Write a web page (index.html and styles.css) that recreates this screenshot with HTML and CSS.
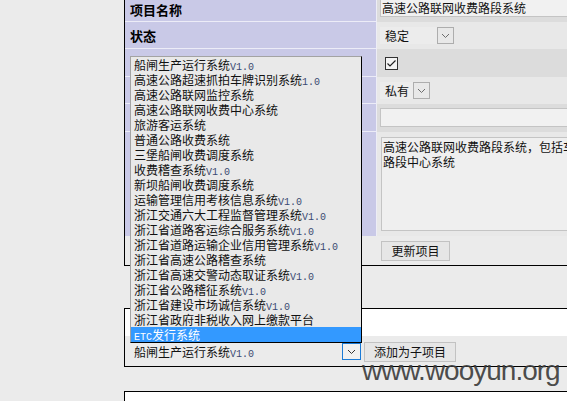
FILE: index.html
```html
<!DOCTYPE html>
<html>
<head>
<meta charset="utf-8">
<link rel="stylesheet" href="styles.css">
</head>
<body>
<div class="form-box">
  <div class="row r1">
    <div class="label">项目名称</div>
    <div class="value v-dark top"><input class="text-input" type="text" value="高速公路联网收费路段系统"></div>
  </div>
  <div class="row r2">
    <div class="label">状态</div>
    <div class="value v-light">
      <span class="sel sel-wide"><span class="sel-text">稳定</span><span class="arrow"><svg width="9" height="6" viewBox="0 0 9 6"><path d="M1 1 L4.5 4.5 L8 1" fill="none" stroke="#6d6d6d" stroke-width="1"/></svg></span></span>
    </div>
  </div>
  <div class="row r3">
    <div class="label"></div>
    <div class="value v-dark">
      <span class="checkbox"><svg width="11" height="11" viewBox="0 0 11 11"><path d="M1.5 5.5 L4 8 L9.5 2.5" fill="none" stroke="#222" stroke-width="1.2"/></svg></span>
    </div>
  </div>
  <div class="row r4">
    <div class="label"></div>
    <div class="value v-light">
      <span class="sel sel-narrow"><span class="sel-text">私有</span><span class="arrow"><svg width="9" height="6" viewBox="0 0 9 6"><path d="M1 1 L4.5 4.5 L8 1" fill="none" stroke="#6d6d6d" stroke-width="1"/></svg></span></span>
    </div>
  </div>
  <div class="row r5">
    <div class="label"></div>
    <div class="value v-dark top"><input class="text-input" type="text" value=""></div>
  </div>
  <div class="row r6">
    <div class="label last"></div>
    <div class="value v-light top"><textarea class="desc" wrap="off">高速公路联网收费路段系统，包括车道系统、收费站系统、
路段中心系统</textarea></div>
  </div>
  <div class="btn-row">
    <button class="btn btn-update">更新项目</button>
  </div>
</div>

<div class="sub-box">
  <div class="sub-white"></div>
  <div class="sub-row">
    <span class="sel sel-parent"><span class="sel-text">船闸生产运行系统<span class="ver">V1.0</span></span><span class="arrow arrow-focus"><svg width="9" height="6" viewBox="0 0 9 6"><path d="M1 1 L4.5 4.5 L8 1" fill="none" stroke="#333" stroke-width="1"/></svg></span></span>
    <button class="btn btn-add">添加为子项目</button>
  </div>
</div>

<div class="third-box"></div>

<ul class="listbox">
  <li class="opt">船闸生产运行系统<span class="ver">V1.0</span></li>
  <li class="opt">高速公路超速抓拍车牌识别系统<span class="ver">1.0</span></li>
  <li class="opt">高速公路联网监控系统</li>
  <li class="opt">高速公路联网收费中心系统</li>
  <li class="opt">旅游客运系统</li>
  <li class="opt">普通公路收费系统</li>
  <li class="opt">三堡船闸收费调度系统</li>
  <li class="opt">收费稽查系统<span class="ver">V1.0</span></li>
  <li class="opt">新坝船闸收费调度系统</li>
  <li class="opt">运输管理信用考核信息系统<span class="ver">V1.0</span></li>
  <li class="opt">浙江交通六大工程监督管理系统<span class="ver">V1.0</span></li>
  <li class="opt">浙江省道路客运综合服务系统<span class="ver">V1.0</span></li>
  <li class="opt">浙江省道路运输企业信用管理系统<span class="ver">V1.0</span></li>
  <li class="opt">浙江省高速公路稽查系统</li>
  <li class="opt">浙江省高速交警动态取证系统<span class="ver">V1.0</span></li>
  <li class="opt">浙江省公路稽征系统<span class="ver">V1.0</span></li>
  <li class="opt">浙江省建设市场诚信系统<span class="ver">V1.0</span></li>
  <li class="opt">浙江省政府非税收入网上缴款平台</li>
  <li class="opt selected"><span class="ver">ETC</span>发行系统</li>
</ul>

<div class="watermark">www.wooyun.org</div>
</body>
</html>
```

FILE: styles.css
```css
html, body {
  margin: 0;
  padding: 0;
}

body {
  background: #ebebeb;
  font-family: "Noto Sans CJK SC", "Liberation Sans", sans-serif;
  font-size: 12px;
  color: #111;
  width: 567px;
  height: 401px;
  overflow: hidden;
  position: relative;
}

.form-box {
  margin-left: 124px;
  margin-top: -2px;
  border-left: 1px solid #000;
  border-bottom: 1px solid #000;
}

.row {
  display: flex;
  background: #ededf6;
}

.label {
  flex: none;
  width: 251px;
  box-sizing: border-box;
  padding-left: 5px;
  background: #c9c9e7;
  border-bottom: 1px solid #ececf7;
  font-weight: bold;
  font-size: 13px;
  display: flex;
  align-items: center;
  color: #000;
}

.label.last {
  border-bottom: none;
}

.value {
  flex: 1;
  min-width: 0;
  overflow: hidden;
  margin-left: 1px;
  padding-left: 3px;
  display: flex;
  align-items: center;
}

.value.top {
  align-items: flex-start;
}

.v-dark { background: #dcdcdc; }
.v-light { background: #e8e8e8; }

.r1 { height: 24px; }
.r2 { height: 27px; }
.r3 { height: 28px; }
.r4 { height: 27px; }
.r5 { height: 28px; }
.r6 { height: 104px; }

.r5 .value { padding-top: 4px; }
.r6 .value { padding-top: 5px; padding-left: 4px; }

.text-input {
  flex: none;
  box-sizing: border-box;
  width: 400px;
  height: 19px;
  margin: 0;
  padding: 0 1px;
  border: 1px solid #c4c4c4;
  background: #f1f1f1;
  font-family: "Noto Sans CJK SC", sans-serif;
  font-size: 12px;
  color: #111;
  outline: none;
}

.desc {
  flex: none;
  box-sizing: border-box;
  width: 400px;
  height: 94px;
  margin: 0;
  padding: 1px 0 0 1px;
  border: 1px solid #c4c4c4;
  background: #efefef;
  font-family: "Noto Sans CJK SC", sans-serif;
  font-size: 12px;
  line-height: 15px;
  color: #111;
  resize: none;
  overflow: hidden;
  outline: none;
}

.sel {
  display: inline-flex;
  align-items: center;
  justify-content: space-between;
  box-sizing: border-box;
  background: #ececec;
  padding-left: 5px;
}

.sel-wide { width: 74px; }
.sel-narrow { width: 50px; }

.sel-text {
  white-space: nowrap;
}

.arrow {
  box-sizing: border-box;
  width: 17px;
  height: 17px;
  border: 1px solid #adadad;
  background: #e8e8e8;
  display: flex;
  align-items: center;
  justify-content: center;
}

.checkbox {
  box-sizing: border-box;
  width: 13px;
  height: 13px;
  margin-left: 5px;
  border: 1px solid #333;
  background: #f4f4f4;
  display: flex;
  align-items: center;
  justify-content: center;
}

.btn-row {
  height: 29px;
  box-sizing: border-box;
  padding: 5px 0 0 256px;
}

.btn {
  box-sizing: border-box;
  height: 20px;
  margin: 0;
  padding: 0;
  border: 1px solid #c2c2c2;
  background: #e6e6e6;
  font-family: "Noto Sans CJK SC", sans-serif;
  font-size: 12px;
  line-height: 18px;
  color: #111;
}

.btn-update { width: 69px; }

.sub-box {
  margin-left: 124px;
  margin-top: 42px;
  border: 1px solid #000;
  border-right: none;
}

.sub-white {
  height: 27px;
  background: #fff;
}

.sub-row {
  height: 30px;
  box-sizing: border-box;
  padding: 7px 0 0 5px;
  display: flex;
  align-items: flex-start;
  background: #ebebeb;
}

.sel-parent {
  width: 231px;
  height: 17px;
  padding-left: 4px;
  background: transparent;
}

.arrow-focus {
  width: 19px;
  border-color: #1a7ad6;
  background: #f0f0f0;
}

.btn-add {
  width: 92px;
  margin-left: 3px;
  margin-top: -1px;
}

.third-box {
  margin-left: 124px;
  margin-top: 24px;
  height: 9px;
  border-top: 1px solid #000;
  border-left: 1px solid #000;
  background: #fff;
}

.ver {
  font-family: "Liberation Mono", monospace;
  font-size: 10px;
  color: #3b4a72;
}

.listbox {
  position: absolute;
  left: 130px;
  top: 56px;
  width: 232px;
  box-sizing: border-box;
  margin: 0;
  padding: 0;
  list-style: none;
  background: #e9e9e9;
  border: 1px solid #000;
  border-top-color: #a3a3a3;
  border-left-color: #a3a3a3;
}

.opt {
  height: 15px;
  line-height: 15px;
  padding-left: 3px;
  white-space: nowrap;
  color: #111;
}

.opt.selected {
  background: #3399ff;
  color: #fff;
}

.opt.selected .ver {
  color: #fff;
}

.watermark {
  position: absolute;
  left: 362px;
  top: 355px;
  font-family: "Liberation Sans", Arial, sans-serif;
  font-size: 28px;
  letter-spacing: -1px;
  color: rgba(60, 60, 60, 0.92);
  white-space: nowrap;
}
```
